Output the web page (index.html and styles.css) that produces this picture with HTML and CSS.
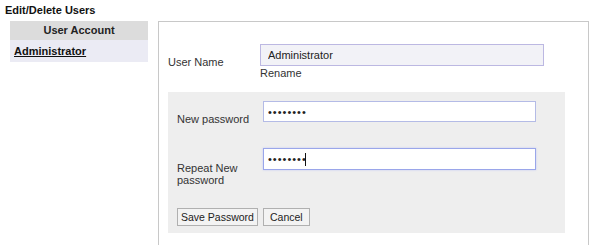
FILE: index.html
```html
<!DOCTYPE html>
<html>
<head>
<meta charset="utf-8">
<link rel="stylesheet" href="styles.css">
</head>
<body>
<h1 class="title">Edit/Delete Users</h1>
<div class="layout">
  <div class="accounts">
    <div class="accounts-head">User Account</div>
    <div class="accounts-row"><a class="acct-link" href="#">Administrator</a></div>
  </div>
  <div class="panel">
    <div class="name-row">
      <label class="lbl name-lbl">User Name</label>
      <div class="name-field">
        <input class="inp inp-name" type="text" value="Administrator">
        <div class="rename">Rename</div>
      </div>
    </div>
    <div class="pwbox">
      <div class="pw-row">
        <label class="lbl pw-lbl1">New password</label>
        <input class="inp inp-pw" type="password" value="password">
      </div>
      <div class="pw-row">
        <label class="lbl pw-lbl2">Repeat New<br>password</label>
        <div class="pw-wrap">
          <input class="inp inp-pw focused" type="password" value="password">
          <span class="caret"></span>
        </div>
      </div>
      <div class="buttons">
        <button class="btn">Save Password</button>
        <button class="btn btn-cancel">Cancel</button>
      </div>
    </div>
  </div>
</div>
</body>
</html>
```
FILE: styles.css
```css
html, body {
  margin: 0;
  padding: 0;
  background: #ffffff;
  height: 245px;
  overflow: hidden;
}
body {
  font-family: "Liberation Sans", Arial, sans-serif;
  font-size: 11px;
  color: #222;
}
.title {
  margin: 0;
  padding: 4px 0 0 5px;
  height: 18px;
  box-sizing: border-box;
  font-size: 11px;
  font-weight: bold;
  line-height: 13px;
  color: #111;
}
.layout {
  display: flex;
  align-items: flex-start;
  padding-top: 3px;
  padding-left: 10px;
  gap: 10px;
}
.accounts {
  width: 138px;
  flex: none;
}
.accounts-head {
  background: #dcdcdc;
  height: 19px;
  line-height: 19px;
  text-align: center;
  font-weight: bold;
  color: #222;
}
.accounts-row {
  background: #ebebf4;
  height: 22px;
  line-height: 22px;
  padding-left: 4px;
}
.acct-link {
  color: #111;
  font-weight: bold;
  text-decoration: underline;
}
.panel {
  width: 431px;
  height: 230px;
  border: 1px solid #c8c8c8;
  border-bottom: none;
  padding: 22px 0 0 9px;
  box-sizing: border-box;
  flex: none;
}
.name-row {
  display: grid;
  grid-template-columns: 92px 284px;
  align-items: center;
}
.lbl {
  color: #333;
  line-height: 12px;
}
.name-lbl {
  padding-top: 1px;
}
.inp {
  display: block;
  box-sizing: border-box;
  margin: 0;
  font-family: "Liberation Sans", Arial, sans-serif;
  font-size: 11px;
  color: #222;
  outline: none;
}
.inp-name {
  width: 284px;
  height: 22px;
  background: #f2f2f7;
  border: 1px solid #bcb8e2;
  padding: 0 7px;
}
.rename {
  padding-top: 1px;
  line-height: 12px;
  color: #333;
}
.pwbox {
  margin-top: 13px;
  width: 397px;
  height: 141px;
  background: #eeeeee;
  padding: 9px 0 0 9px;
  box-sizing: border-box;
}
.pw-row {
  display: grid;
  grid-template-columns: 86px 273px;
  align-items: start;
  height: 21px;
}
.pw-row + .pw-row {
  margin-top: 26px;
  height: 22px;
}
.pw-lbl1 {
  padding-top: 12px;
}
.pw-lbl2 {
  padding-top: 14px;
}
.inp-pw {
  width: 273px;
  height: 21px;
  background: #ffffff;
  border: 1px solid #b4bbe6;
  padding: 0 4px;
  letter-spacing: 1px;
}
.pw-wrap {
  position: relative;
}
.inp-pw.focused {
  height: 22px;
  border: 1px solid #9aa6ea;
  box-shadow: 0 0 2px #c3caf5;
}
.caret {
  position: absolute;
  left: 42px;
  top: 5px;
  width: 1px;
  height: 13px;
  background: #111;
}
.buttons {
  display: flex;
  gap: 5px;
  margin-top: 38px;
}
.btn {
  font-family: "Liberation Sans", Arial, sans-serif;
  font-size: 10.5px;
  color: #222;
  height: 18px;
  padding: 0 3px;
  background: #f3f3f3;
  border: 1px solid #b0b0b0;
  border-radius: 0;
  line-height: 14px;
}
.btn-cancel {
  padding: 0 6px;
}
```
